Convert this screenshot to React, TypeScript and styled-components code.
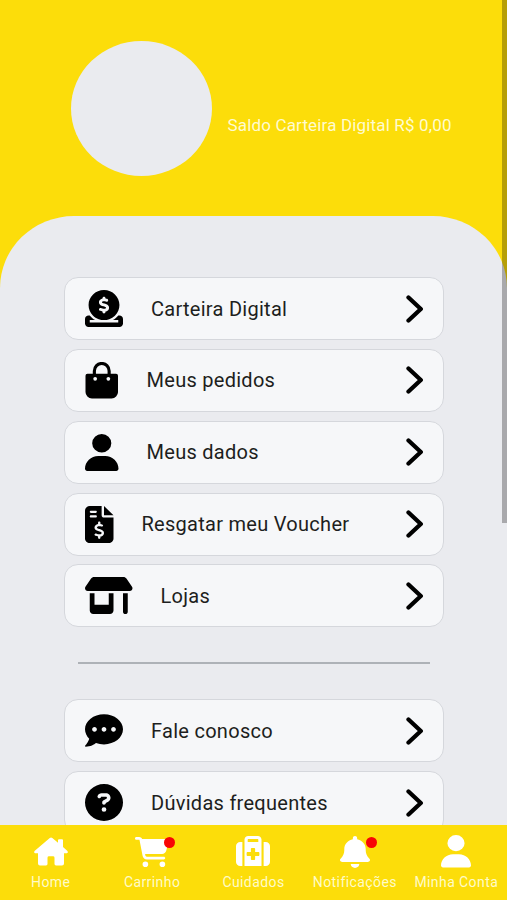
import React from "react";
import styled, { createGlobalStyle } from "styled-components";
import type { IconType } from "react-icons";
import { FaCommentDots } from "react-icons/fa";
import {
  FaBell,
  FaCartShopping,
  FaCircleDollarToSlot,
  FaCircleQuestion,
  FaFileInvoiceDollar,
  FaShop,
  FaSuitcaseMedical,
  FaUser,
} from "react-icons/fa6";

const GlobalStyle = createGlobalStyle`
  * { box-sizing: border-box; }
  body {
    margin: 0;
    background: #eaebef;
    font-family: Roboto, "Liberation Sans", sans-serif;
  }
`;

const Screen = styled.div`
  position: relative;
  display: flex;
  flex-direction: column;
  height: 900px;
  overflow: hidden;
  background: #fcdd0a;
`;

const Header = styled.header`
  flex: none;
  display: flex;
  height: 216px;
  padding: 41px 0 0 71px;
  gap: 15.5px;
`;

const Avatar = styled.div`
  width: 141px;
  height: 135px;
  border-radius: 50%;
  background: #eaebef;
`;

const Balance = styled.p`
  margin: 74px 0 0;
  color: #fffbd0;
  font-size: 17px;
  line-height: 20px;
  letter-spacing: 0.16px;
  white-space: nowrap;
`;

const Panel = styled.main`
  flex: 1;
  min-height: 0;
  overflow: hidden;
  padding: 61px 64px 0;
  border-radius: 74px 74px 0 0 / 72px 72px 0 0;
  background: #eaebef;
`;

const Menu = styled.nav`
  display: flex;
  flex-direction: column;
  gap: 8.85px;
`;

const MenuRow = styled.button`
  flex: none;
  display: flex;
  align-items: center;
  width: 379.5px;
  height: 63px;
  padding: 0 19px 0 20px;
  border: 1px solid #d5d7dc;
  border-radius: 14px;
  background: #f6f7f9;
  color: #000;
  font: inherit;
  text-align: left;
`;

const IconBox = styled.span<{ $width: number; $height: number }>`
  display: flex;
  width: ${(p) => p.$width}px;
  height: ${(p) => p.$height}px;

  svg {
    width: 100%;
    height: 100%;
  }
`;

const RowLabel = styled.span`
  flex: 1;
  margin-left: 28px;
  color: #1d1e20;
  font-size: 20px;
  line-height: 24px;
  letter-spacing: 0.28px;
  white-space: nowrap;
`;

const Divider = styled.hr`
  width: 352px;
  height: 2px;
  margin: 35px 0 35px 14px;
  border: 0;
  background: #aeb2b7;
`;

const TabBar = styled.nav`
  flex: none;
  display: grid;
  grid-template-columns: repeat(5, 1fr);
  height: 75px;
  background: #fcdd0a;
`;

const Tab = styled.a`
  display: flex;
  flex-direction: column;
  align-items: center;
  padding-top: 10px;
  color: #fff;
`;

const TabIcon = styled.span`
  position: relative;
  display: flex;
  align-items: center;
  height: 33px;
`;

const Badge = styled.i<{ $right: number }>`
  position: absolute;
  top: 2px;
  right: ${(p) => p.$right}px;
  width: 11px;
  height: 11px;
  border-radius: 50%;
  background: #f80505;
`;

const TabLabel = styled.span`
  margin-top: 5px;
  color: #fffbc8;
  font-size: 14px;
  line-height: 18px;
  letter-spacing: 0.42px;
  white-space: nowrap;
`;

const ScrollThumb = styled.div`
  position: absolute;
  top: 0;
  right: 0;
  width: 5.5px;
  height: 523px;
  background: rgba(0, 0, 0, 0.28);
`;

const BagIcon: IconType = (props) => (
  <svg viewBox="0 0 34 37" preserveAspectRatio={props.preserveAspectRatio}>
    <path d="M9.5 13V9a7.5 7.5 0 0 1 15 0v4" fill="none" stroke="#000" strokeWidth="3.2" />
    <path
      d="M2.5 11.8h29a2 2 0 0 1 2 2V30a6.5 6.5 0 0 1-6.5 6.5H7A6.5 6.5 0 0 1 .5 30V13.800a2 2 0 0 1 2-2Z"
      fill="#000"
    />
    <circle cx="10.3" cy="16.8" r="1.9" fill="#f6f7f9" />
    <circle cx="23.7" cy="16.8" r="1.9" fill="#f6f7f9" />
  </svg>
);

const HouseIcon: IconType = (props) => (
  <svg viewBox="0 0 34 30" preserveAspectRatio={props.preserveAspectRatio}>
    <path
      d="M15.8 1.1a1.900 1.900 0 0 1 2.500 0L24 5.900V3.300a1 1 0 0 1 1-1h3a1 1 0 0 1 1 1v6.900l4.200 3.700c1.300 1.200.6 2.700-1.100 2.700H30V27a2 2 0 0 1-2 2h-6a1.500 1.500 0 0 1-1.500-1.500V21a1.500 1.500 0 0 0-1.500-1.500h-4a1.500 1.500 0 0 0-1.500 1.500v6.500A1.500 1.500 0 0 1 12 29H6a2 2 0 0 1-2-2V16.600H1.900C.2 16.600-.5 15.100.8 13.900Z"
      fill="currentColor"
    />
  </svg>
);

const Chevron = () => (
  <svg width="18" height="28" viewBox="0 0 18 28" fill="none">
    <path
      d="M2.500 2.500 14.800 14 2.500 25.500"
      stroke="#000"
      strokeWidth="4.300"
      strokeLinecap="round"
      strokeLinejoin="round"
    />
  </svg>
);

type Entry = { label: string; icon: IconType; width: number };

const accountEntries: Entry[] = [
  { label: "Carteira Digital", icon: FaCircleDollarToSlot, width: 38 },
  { label: "Meus pedidos", icon: BagIcon, width: 33.5 },
  { label: "Meus dados", icon: FaUser, width: 33.5 },
  { label: "Resgatar meu Voucher", icon: FaFileInvoiceDollar, width: 28.5 },
  { label: "Lojas", icon: FaShop, width: 47.5 },
];

const helpEntries: Entry[] = [
  { label: "Fale conosco", icon: FaCommentDots, width: 38 },
  { label: "Dúvidas frequentes", icon: FaCircleQuestion, width: 38 },
];

const tabs: (Entry & { height: number; badge?: number })[] = [
  { label: "Home", icon: HouseIcon, width: 34, height: 29.5 },
  { label: "Carrinho", icon: FaCartShopping, width: 34, height: 30, badge: -6 },
  { label: "Cuidados", icon: FaSuitcaseMedical, width: 34, height: 32 },
  { label: "Notificações", icon: FaBell, width: 30, height: 32, badge: -7.5 },
  { label: "Minha Conta", icon: FaUser, width: 30, height: 32.5 },
];

const MenuList = ({ entries }: { entries: Entry[] }) => (
  <Menu>
    {entries.map(({ label, icon: Icon, width }) => (
      <MenuRow key={label}>
        <IconBox $width={width} $height={37}>
          <Icon preserveAspectRatio="none" />
        </IconBox>
        <RowLabel>{label}</RowLabel>
        <Chevron />
      </MenuRow>
    ))}
  </Menu>
);

export default function App() {
  return (
    <Screen>
      <GlobalStyle />
      <Header>
        <Avatar />
        <Balance>Saldo Carteira Digital R$ 0,00</Balance>
      </Header>
      <Panel>
        <MenuList entries={accountEntries} />
        <Divider />
        <MenuList entries={helpEntries} />
      </Panel>
      <TabBar>
        {tabs.map(({ label, icon: Icon, width, height, badge }) => (
          <Tab key={label}>
            <TabIcon>
              <IconBox $width={width} $height={height}>
                <Icon preserveAspectRatio="none" />
              </IconBox>
              {badge !== undefined && <Badge $right={badge} />}
            </TabIcon>
            <TabLabel>{label}</TabLabel>
          </Tab>
        ))}
      </TabBar>
      <ScrollThumb />
    </Screen>
  );
}
